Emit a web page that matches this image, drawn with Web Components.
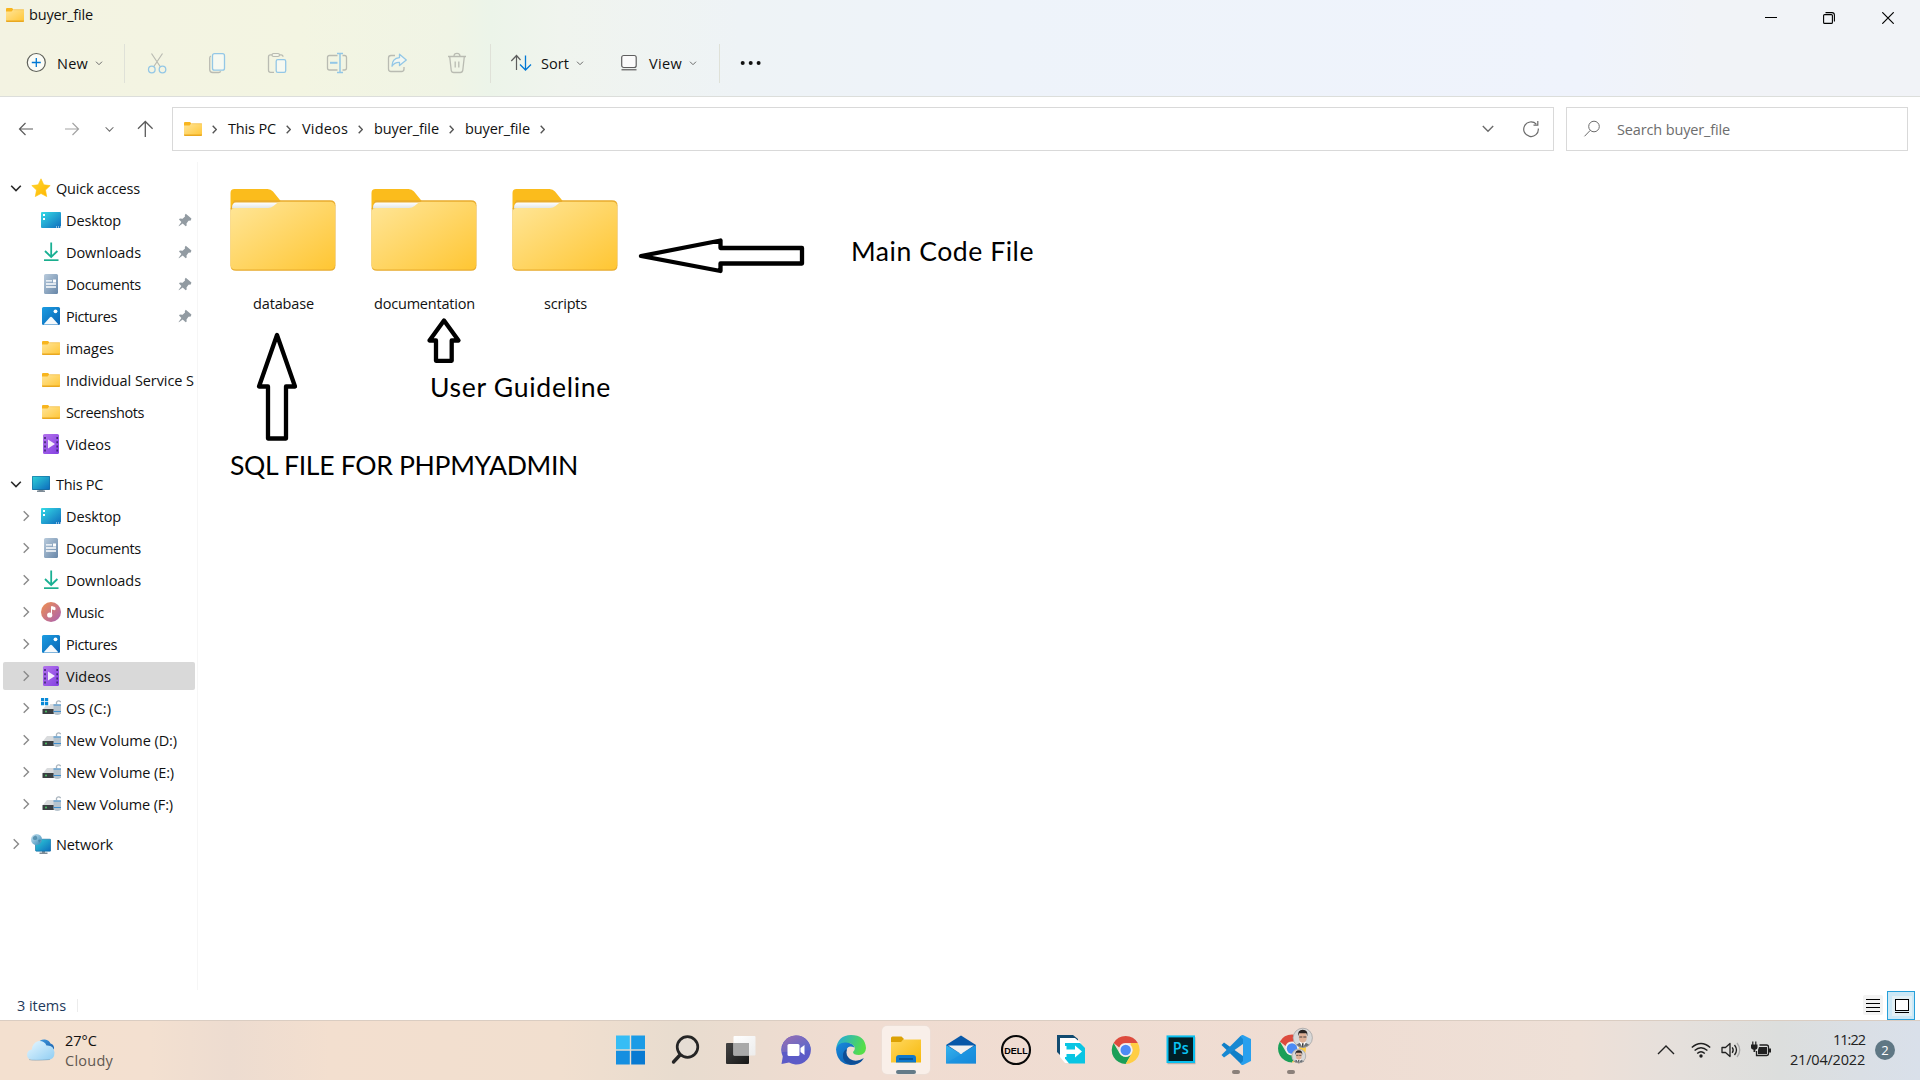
<!DOCTYPE html>
<html lang="en">
<head>
<meta charset="utf-8">
<title>buyer_file</title>
<style>
html,body{margin:0;padding:0;background:#fff}
body{font-family:"Open Sans","Noto Sans",sans-serif;font-size:14.5px;color:#111;width:1920px;height:1080px;overflow:hidden}
</style>
</head>
<body>
<desktop-screen></desktop-screen>
<script>
const lg=(id,a,b,x2=1,y2=1)=>`<linearGradient id="${id}" x1="0" y1="0" x2="${x2}" y2="${y2}"><stop offset="0" stop-color="${a}"/><stop offset="1" stop-color="${b}"/></linearGradient>`;
const G='#6b6b6b', DG='#b9bbb2', DB='#93c7e6';
const drive=`<path d="M6 5h10l4 5H2z" fill="#d9dbdd"/><rect x="1.500" y="10" width="18" height="5" rx=".6" fill="#3b3f42"/><circle cx="5" cy="12.500" r=".9" fill="#4fd66a"/><path d="M15.500 5V3.200a2.300 2.300 0 0 1 4.200 0" fill="none" stroke="#a9b4bd" stroke-width="1.300"/><path d="M12.500 5.500h7.500v9q-3.500 3-7.500 0z" fill="#b7c4ce"/><path d="M12.500 6h7.500M12.500 12.500h7.500" stroke="#3f8fcf" stroke-width="1"/>`;
const chrome=`<path d="M14 0A14 14 0 0 1 26.100 7H14a7 7 0 0 0-6.500 4.400L1.900 7A14 14 0 0 1 14 0z" fill="#dd4b3e"/><path d="M1.900 7A14 14 0 0 0 14 28l6-10.500A7 7 0 0 1 8 17.500z" fill="#1a9f58"/><path d="M26.100 7A14 14 0 0 1 14 28l6-10.500A7 7 0 0 0 19 9V7z" fill="#ffce44"/><circle cx="14" cy="14" r="6.600" fill="#f3f3f3"/><circle cx="14" cy="14" r="5.200" fill="#4c8bf5"/>`;
const person=(cx,cy,r,id)=>`<clipPath id="${id}"><circle cx="${cx}" cy="${cy}" r="${r}"/></clipPath><g clip-path="url(#${id})"><circle cx="${cx}" cy="${cy}" r="${r}" fill="#d8d8d8"/><g transform="translate(${cx} ${cy}) scale(${r/10})"><path d="M-8 12V8l5-3h6l5 3v4z" fill="#6a6f75"/><path d="M-3.500 4h7L0 10z" fill="#fff"/><path d="M-.8 5.500h1.600L.6 10h-1.200z" fill="#333"/><ellipse cy="-.4" rx="4" ry="5.400" fill="#deb096"/><path d="M-4.600-1.500q-1-6.500 4.600-6.500t4.600 6.500L3.500-4.500h-7z" fill="#2a2422"/><path d="M-3.500-.8h3M.5-.8h3" stroke="#333" stroke-width=".9"/></g></g><circle cx="${cx}" cy="${cy}" r="${r-.4}" fill="none" stroke="#a9a6a4" stroke-width=".8"/>`;
const ICONS={
folder:['0 0 18 14',lg('a','#ffe599','#ffc73a')+`<path d="M0 1a1 1 0 0 1 1-1h5l1.500 1.500L6 4H0z" fill="#f8b51e"/><path d="M0 3.600h5.500L7.500 1.500h9.700q.8 0 .8.800V13H0z" fill="url(#a)"/><path d="M0 12.600h18v.6q0 .8-.8.800H.8q-.8 0-.8-.8z" fill="#e9a820"/><path d="M7.600 1.700H18" stroke="#eeb235" stroke-width=".5"/>`],
plus:['0 0 24 24',`<circle cx="12.300" cy="11.500" r="9" fill="#fbfcf6" stroke="#5e6059" stroke-width="1.200"/><path d="M12.300 7v9M7.800 11.500h9" stroke="#0078d4" stroke-width="1.300"/>`],
chev:['0 0 8 8',`<path d="M1 2.700l3 3 3-3" fill="none" stroke="${G}" stroke-width="1"/>`],
cut:['0 0 24 24',`<path d="M6.500 2.500L15.500 16M17.500 2.500L8.500 16" stroke="${DG}" stroke-width="1.200" fill="none"/><circle cx="6.800" cy="18.500" r="3.300" fill="none" stroke="${DB}" stroke-width="1.300"/><circle cx="17.500" cy="18.500" r="3.300" fill="none" stroke="${DB}" stroke-width="1.300"/>`],
copy:['0 0 24 24',`<path d="M6 5q-1.300.5-1.300 2v11.500q0 3 3 3h6q1.500 0 2-1.200" fill="none" stroke="${DG}" stroke-width="1.300"/><rect x="7.500" y="2.700" width="12" height="16.500" rx="2" fill="#f6f9f1" stroke="${DB}" stroke-width="1.300"/>`],
paste:['0 0 24 24',`<path d="M9 21.300H5.500q-2 0-2-2V5.800q0-2 2-2h10.500q2 0 2 2" fill="none" stroke="${DG}" stroke-width="1.300"/><rect x="7" y="2.500" width="7.500" height="3" rx="1.500" fill="#f3f5e8" stroke="${DG}" stroke-width="1.200"/><rect x="11.200" y="8.700" width="9.500" height="12.600" rx="1.600" fill="#f6f9f1" stroke="${DB}" stroke-width="1.300"/>`],
rename:['0 0 24 24',`<path d="M12.500 4.500H4.500q-2 0-2 2v10.500q0 2 2 2h8M17.500 4.500h2q2 0 2 2v10.500q0 2-2 2h-2" fill="none" stroke="${DG}" stroke-width="1.300"/><path d="M5 11.800h7.500" stroke="${DB}" stroke-width="2"/><path d="M12 2.500h6M15 2.500v19M12 21.500h6" stroke="${DB}" stroke-width="1.500"/>`],
share:['0 0 24 24',`<path d="M10 4.500H6q-2.500 0-2.500 2.500v11q0 2.500 2.500 2.500h10.500q2.500 0 2.500-2.500v-2" fill="none" stroke="${DG}" stroke-width="1.300"/><path d="M14.500 3.200l6.800 5.800-6.800 5.600v-3.200q-5-.3-7.500 3.800 0-8 7.500-8.600z" fill="#f2f7f2" stroke="${DB}" stroke-width="1.300" stroke-linejoin="round"/>`],
del:['0 0 24 24',`<path d="M3 5.500h18M9 5.300q0-3 3-3t3 3M4.700 5.800l1.500 13.400q.3 2.300 2.500 2.300h6.600q2.200 0 2.500-2.300L19.300 5.800M10.200 10.500v6M13.800 10.500v6" fill="none" stroke="${DG}" stroke-width="1.300"/>`],
sort:['0 0 24 24',`<path d="M7.500 19V5M2.300 10L7.500 4.500l4 4.500" fill="none" stroke="#5c5c5c" stroke-width="1.200"/><path d="M16.500 4.500V19M11 13.500l5.500 5.500 5.500-5.500" fill="none" stroke="#0078d4" stroke-width="1.300"/>`],
view:['0 0 24 24',`<rect x="4.700" y="4.500" width="14.500" height="12" rx="2" fill="#fbfbfb" stroke="#5e5e5e" stroke-width="1.200"/><path d="M4.500 18.700h15" stroke="#777" stroke-width="1.500"/>`],
dots:['0 0 24 24',`<circle cx="3.700" cy="12" r="2" fill="#111"/><circle cx="11.700" cy="12" r="2" fill="#111"/><circle cx="19.600" cy="12" r="2" fill="#111"/>`],
min:['0 0 12 12',`<path d="M0 5.500h12" stroke="#000"/>`],
max:['0 0 12 12',`<rect x=".6" y="2.600" width="8.800" height="8.800" rx="1" fill="none" stroke="#000" stroke-width="1.100"/><path d="M2.500.6H9q2.400 0 2.400 2.400v6.500" fill="none" stroke="#000" stroke-width="1.100"/>`],
close:['0 0 12 12',`<path d="M.3.300l11.400 11.400M11.700.3L.3 11.700" stroke="#000" stroke-width="1.200"/>`],
back:['0 0 20 20',`<path d="M17 10H4M9.500 4L3.500 10l6 6" fill="none" stroke="#5c5c5c" stroke-width="1.200"/>`],
fwd:['0 0 20 20',`<path d="M3 10h13M10.500 4l6 6-6 6" fill="none" stroke="#a3a3a3" stroke-width="1.200"/>`],
up:['0 0 20 20',`<path d="M10.300 18V2.700M3 9.800l7.300-7.300 7.300 7.300" fill="none" stroke="#5c5c5c" stroke-width="1.300"/>`],
chevd:['0 0 12 12',`<path d="M.8 3l5.200 5.200L11.200 3" fill="none" stroke="${G}" stroke-width="1.400"/>`],
sep:['0 0 5 9',`<path d="M.7.800l3.600 3.700L.7 8.200" fill="none" stroke="#555" stroke-width="1.400"/>`],
refresh:['0 0 18 18',`<path d="M16.300 8.500A7.300 7.300 0 1 1 14.300 4.200M15.800 1v4.200h-4.300" fill="none" stroke="${G}" stroke-width="1.200"/>`],
find:['0 0 18 18',`<circle cx="11" cy="6.500" r="5.300" fill="none" stroke="${G}" stroke-width="1"/><path d="M7.300 10.300L1.500 16.300" stroke="${G}" stroke-width="1"/>`],
open:['0 0 12 12',`<path d="M1.200 3.700l4.800 4.800 4.800-4.800" fill="none" stroke="#2b2b2b" stroke-width="1.600"/>`],
shut:['0 0 12 12',`<path d="M3.700 1.200L8.500 6l-4.800 4.800" fill="none" stroke="#8a8a8a" stroke-width="1.400"/>`],
star:['0 0 20 20',lg('a','#ffd92e','#ffb300')+`<path d="M10 .8l2.800 6 6.400.8-4.700 4.500 1.200 6.500L10 15.500l-5.700 3.100 1.200-6.500L.8 7.600l6.400-.8z" fill="url(#a)" stroke="#ffc40c" stroke-linejoin="round" stroke-width=".6"/>`],
desktop:['0 0 20 20',lg('a','#35dbe6','#0f6cbd')+`<rect y="2" width="20" height="16" rx="1" fill="url(#a)"/><path d="M2 4h2v2H2zM2 8h2v2H2zM15 16.500h1v1h-1zM17 16.500h1v1h-1zM19 16.500h1v1h-1z" fill="#fff"/>`],
down:['0 0 20 20',`<path d="M10.200.5v14M4 9l6.200 6L16.400 9" fill="none" stroke="#19b093" stroke-width="1.800"/><rect x="3" y="17.300" width="14.500" height="1.700" fill="#1aae8e"/>`],
doc:['0 0 20 20',lg('a','#b9cbdc','#6786a8')+`<rect x="3" y="0" width="14" height="20" rx="1.500" fill="url(#a)"/><path d="M5 6.800h6M5 10h10M5 13h10" stroke="#fff" stroke-width="1.300"/><rect x="12" y="5.500" width="3" height="3" fill="#fff"/>`],
pic:['0 0 20 20',lg('a','#1b9de2','#0a64b4')+`<rect x="1" y="1" width="18" height="18" rx="1.500" fill="url(#a)"/><circle cx="14.500" cy="5.300" r="1.900" fill="#fff"/><path d="M2.500 18.600L9 11.300q1-1 2 0l6.500 7.300z" fill="#f5f9fc"/>`],
video:['0 0 20 20',lg('a','#b473ec','#8340e2')+`<rect x="2" y="0" width="16" height="20" rx="1.500" fill="url(#a)"/><path d="M7 5.500l7 4.500-7 4.500z" fill="#f4edfc"/><path d="M4 3v15M16.200 3v15" stroke="#3d2672" stroke-width="1.600" stroke-dasharray="2 2.200"/>`],
music:['0 0 20 20',lg('a','#f0904e','#a960b4')+`<circle cx="10" cy="10" r="10" fill="url(#a)"/><circle cx="8.700" cy="13" r="2.600" fill="#fff"/><path d="M10.500 13V4.500l3.500 1v2.300l-3.500-1" fill="#fff" stroke="#fff" stroke-width="1"/>`],
pc:['0 0 20 20',lg('a','#2fd0d8','#0d6cbd')+`<path d="M7.500 14.500h5V17h-5zM6 16.500h8V18H6z" fill="#7d8b96"/><rect x="1" y="2" width="18" height="14" rx=".8" fill="#166a9e"/><rect x="1.600" y="2.600" width="16.800" height="12.600" fill="url(#a)"/>`],
net:['0 0 20 20',lg('a','#2fd0d8','#0d6cbd')+lg('b','#d5eaf5','#2f86b5')+`<path d="M11 17h3v2h-3zM8.500 18.500h8V20h-8z" fill="#7d8b96"/><rect x="4.500" y="5.200" width="15.300" height="12" rx=".8" fill="url(#a)" stroke="#166a9e" stroke-width=".6"/><circle cx="5.500" cy="5.500" r="5.500" fill="url(#b)"/><path d="M2 3q3-3 4 0t-2 3-2-3zM7 6q2-1 3 0l-2 3z" fill="#3f7f9f" opacity=".7"/>`],
drive:['0 0 20 20',`<g transform="translate(0 1)">${drive}</g>`],
osdrive:['0 0 20 20',`<g transform="translate(0 1)">${drive}</g><rect width="9" height="7.500" fill="#fff"/><path d="M0 0h3.200v3.200H0zM4 0h3.200v3.200H4zM0 4h3.200v3.200H0zM4 4h3.200v3.200H4z" fill="#0a8ad8"/>`],
pin:['0 0 14 14',`<path d="M7.800.800l5.600 4.800-.6 1.800-2.300.3-2 2.700.2 2-1 .8-3-2.800L.9 13.300l-.3-.4 2.800-3.800L1 6.500l.9-1 2.700.2L7 3.500l-.2-1.600z" fill="#929ba2"/>`],
big:['0 0 106 84',lg('a','#ffe699','#ffc633')+lg('w','#ffffff','#dfe4e8',0,1)+`<path d="M.5 20V4q0-4 4-4h33q3.500 0 5.500 2.500l8.500 10.500-8 8z" fill="#fbbc1c"/><path d="M4 11.300h96q5.500 0 5.500 5v60q0 5.500-5.500 5.500H6q-5.500 0-5.500-5.500V20z" fill="#e8ab2c"/><path d="M2 19q0-5.500 4-5.500h43v6H2z" fill="url(#w)"/><path d="M.5 23.500q0-4.500 4.500-4.500h33q3 0 5.500-2l3-2.500q1.500-1.700 4-1.700H100q5 0 5 4.500V75.500q0 5-5 5H6q-5.500 0-5.500-5z" fill="url(#a)"/>`],
list:['0 0 14 14',`<path d="M0 1.500h14M0 5.500h14M0 9.500h14M0 13.500h14" stroke="#000" stroke-width="1"/>`],
large:['0 0 14 14',`<rect x=".5" y=".5" width="13" height="11" fill="#fff" stroke="#000"/><path d="M0 13.500h14" stroke="#000"/>`],
cloud:['0 0 30 24',lg('a','#e8f8ff','#8fcdf3')+lg('b','#3f9ae0','#1c62ae')+`<path d="M12 5Q14 1 19 1.500q4 .5 5.500 4 4 1 3.500 6L20 9z" fill="url(#b)"/><path d="M7 22q-6-.5-6-5.500Q1.500 12 6 11.500 6 5 12.500 3q6-.5 8 4.500Q28 7 28.500 14.500 28.500 21.500 22 22z" fill="url(#a)"/><path d="M3 21.500q4 1.500 21 0" stroke="#6d91aa" stroke-width=".8" fill="none" opacity=".6"/>`],
start:['0 0 32 32',`<path d="M1 1.500h13.800v13.800H1z" fill="#36bdf5"/><path d="M16.200 1.500H30v13.800H16.200z" fill="#1a9be6"/><path d="M1 16.700h13.800v13.800H1z" fill="#158fe0"/><path d="M16.200 16.700H30v13.800H16.200z" fill="#087ad2"/>`],
search:['0 0 32 32',`<circle cx="17.500" cy="13" r="10.300" fill="#e5ddd4" stroke="#252525" stroke-width="2.700"/><path d="M10 21L3.500 28" stroke="#252525" stroke-width="3.400" stroke-linecap="round"/>`],
task:['0 0 32 32',lg('a','#444','#171717')+lg('b','#fff','#ececec')+`<rect x="1" y="9" width="23" height="21" rx="1" fill="url(#a)"/><rect x="8.500" y="2" width="22" height="19.500" rx="1" fill="url(#b)"/><path d="M8.500 9H24v12.500H8.500z" fill="#a9a9a9"/>`],
chat:['0 0 32 32',lg('a','#9b6eb0','#5267d0')+`<path d="M16 1.500a14.500 14.500 0 1 1-7 27L1.500 30l1.300-7.500A14.500 14.500 0 0 1 16 1.500z" fill="#5c5bc7"/><path d="M16 1.500A14.500 14.500 0 0 1 30.500 16Q16 18 2 18 1 3 16 1.500z" fill="url(#a)"/><rect x="7.500" y="10" width="12" height="12" rx="1.500" fill="#fff"/><path d="M20.500 14l4-3v10l-4-3z" fill="#fff"/>`],
edge:['0 0 32 32',lg('a','#1fa5e8','#55de48',1,.3)+lg('b','#188cdf','#0a50a0')+`<path d="M1 15Q3 1 16 1q14 0 15 13-.5 7-7 7-6 0-6-3 3-3 1-6-4-5-11-2-5 1-7 5z" fill="url(#a)"/><path d="M1 15Q3 8 11 8.500q7 .5 8.500 5-6-3-8 2-2 7 4 10.500 6 3 13-1Q24 31 16 31 2 30 1 15z" fill="url(#b)"/><path d="M12 15q-2 6 3 10 6 4 14-1-5 7-14 6.500Q7 28 8 20q1-4 4-5z" fill="#0d4e96"/>`],
explorer:['0 0 32 32',lg('a','#ffd75e','#f7b90b')+`<path d="M1 4q0-1.500 1.500-1.500h9L14 5l-3 4H1z" fill="#dca104"/><path d="M1 8h10l2.500-2.500H31V28.500H1z" fill="url(#a)"/><path d="M6 28.500V24q0-3 3-3h14q3 0 3 3v4.500z" fill="#0f78ca"/><path d="M9 25h14" stroke="#074c89" stroke-width="1.500"/>`],
mail:['0 0 32 32',lg('a','#34b4ef','#1681d3')+`<path d="M1 11L16 1.500 31 11v8H1z" fill="#0858a8"/><path d="M1 11l15 9 15-9v18.500H1z" fill="url(#a)"/><path d="M1 29.500L31 11v18.500z" fill="#168fe0" opacity=".55"/><path d="M3 11.500L16 20l13-8.500z" fill="#f2f1f0"/>`],
dell:['0 0 32 32',`<circle cx="16" cy="16" r="14" fill="none" stroke="#080808" stroke-width="2.100"/><text x="16" y="19.500" text-anchor="middle" font-family="Liberation Sans,sans-serif" font-weight="700" font-size="9.800" textLength="23.500" lengthAdjust="spacingAndGlyphs">DELL</text>`],
swap:['0 0 32 32',`<path d="M2 1h16l5 4v20H9l-7-7z" fill="#124b70"/><path d="M5 4h15l6 5v20H10L5 23z" fill="#fff"/><path d="M10 9l15 0 5 5v15.500H14l-4-5z" fill="#09c5e3"/><path d="M10 15.500h10v-4l7 6-7 6v-3.500H10z" fill="#fff"/><path d="M10 12v11" stroke="#fff" stroke-width="3"/>`],
chrome:['0 0 32 32',`<g transform="translate(1.700 2)">${chrome}</g>`],
ps:['0 0 32 32',`<rect x="2.500" y="3.200" width="28" height="27" fill="#777" opacity=".45"/><rect x="2.500" y="2.400" width="26.500" height="25.600" fill="#001e26" stroke="#0abfef" stroke-width="2"/><text x="15.800" y="20" text-anchor="middle" font-family="Open Sans,sans-serif" font-weight="600" font-size="15.500" fill="#09c4f5" textLength="16" lengthAdjust="spacingAndGlyphs">Ps</text>`],
code:['0 0 32 32',`<path d="M4 8.500L1.500 11l19 18.500L23 31V22z" fill="#0f7fc8"/><path d="M4 23.500L1.500 21l19-19L23 1v9z" fill="#1688d2"/><path d="M23 1l8 4v22l-8 4q-2 0-2.500-1.500L23 27V5l-2.500-2.500Q21.500 1 23 1z" fill="#28a0ee"/>`],
chrome2:['0 0 38 38',`<g transform="translate(2 7.500)">${chrome}</g>${person(26.800,10.800,10,'p')}${person(22.800,29,7.300,'q')}`],
caret:['0 0 18 18',`<path d="M1 13l8-8 8 8" fill="none" stroke="#222" stroke-width="1.400"/>`],
wifi:['0 0 20 20',`<path d="M.8 7.500q9.200-8 18.400 0M3.600 10.500q6.400-5.500 12.800 0M6.200 13.500q3.800-3.500 7.600 0" fill="none" stroke="#202020" stroke-width="1.400"/><circle cx="10" cy="16" r="1.700" fill="#202020"/>`],
sound:['0 0 20 20',`<path d="M1 7.500h3.500L9 3.500v13l-4.500-4H1z" fill="none" stroke="#202020" stroke-width="1.300" stroke-linejoin="round"/><path d="M11.200 7.300q2 2.700 0 5.500M13.500 5q4 5 0 10" fill="none" stroke="#202020" stroke-width="1.300"/><path d="M16 3q5.500 7 0 14" fill="none" stroke="#aaa" stroke-width="1.300"/>`],
batt:['0 0 20 20',`<path d="M8.500 5h7q2 0 2 2v6.500q0 2-2 2h-10V11" fill="none" stroke="#202020" stroke-width="1.300"/><path d="M8 7h8v7H7v-4z" fill="#202020"/><path d="M18 8.500h2v4h-2zM0 4.500h6.500v3q0 2-2.200 2.300V12H2.500V9.800Q0 9.500 0 7.500zM1.200 1.500h1.200v3H1.200zM4.200 1.500h1.200v3H4.200z" fill="#202020"/>`]
};
/* <ui-icon name w h> draws one icon of the set above */
class UiIcon extends HTMLElement{constructor(){super();this.attachShadow({mode:'open'})}
connectedCallback(){const i=ICONS[this.getAttribute('name')];const v=i[0].split(' ');const w=this.getAttribute('w')||v[2],h=this.getAttribute('h')||v[3];
this.shadowRoot.innerHTML=`<style>:host{display:block;flex:none;width:${w}px;height:${h}px}svg{display:block}</style><svg width="${w}" height="${h}" viewBox="${i[0]}">${i[1]}</svg>`}}
customElements.define('ui-icon',UiIcon);
/* <fit-text w> spaces its letters so that the line fills the given width */
class FitText extends HTMLElement{constructor(){super();this.attachShadow({mode:'open'})}
connectedCallback(){const w=+this.getAttribute('w');const t=this.textContent;this.shadowRoot.innerHTML=`<style>:host{display:block;flex:none;width:${w}px;white-space:pre;line-height:20px}span{display:inline-block}</style><span><slot></slot></span>`;
const s=this.shadowRoot.querySelector('span');const n=s.getBoundingClientRect().width;s.style.letterSpacing=((w-n)/t.length).toFixed(3)+'px'}}
customElements.define('fit-text',FitText);
const define=(tag,html)=>{const t=document.createElement('template');t.innerHTML=html;customElements.define(tag,class extends HTMLElement{constructor(){super();this.attachShadow({mode:'open'}).append(t.content.cloneNode(true))}})};
const ic=(n,ml,w,h)=>`<ui-icon name="${n}" style="margin-left:${ml}px"${w?` w="${w}"`:''}${h?` h="${h}"`:''}></ui-icon>`;
const tx=(t,ml,w)=>`<fit-text w="${w}" style="margin-left:${ml}px">${t}</fit-text>`;

define('title-bar',`<style>:host{display:flex;height:30px;align-items:flex-start}.t{display:flex;flex:1;padding:5px 0 0 6px;align-items:center}.c{display:flex;align-items:center;padding:12px 26px 0 0;gap:46px}</style>
<div class="t">${ic('folder',0)}${tx('buyer_file',5,64)}</div><div class="c">${ic('min',0)}${ic('max',0)}${ic('close',1)}</div>`);

define('command-bar',`<style>:host{display:flex;height:66px;align-items:center}i{width:1px;height:39px;background:#dfe1d8}fit-text{padding-top:1px}</style>
${ic('plus',24)}${tx('New',9,31)}${ic('chev',7)}<i style="margin-left:21px"></i>${ic('cut',20)}${['copy','paste','rename','share','del'].map(n=>ic(n,36)).join('')}<i style="margin-left:21px"></i>${ic('sort',18)}${tx('Sort',8,28)}${ic('chev',7)}${ic('view',33)}${tx('View',8,33)}${ic('chev',7)}<i style="margin-left:22px"></i>${ic('dots',19)}`);

define('address-row',`<style>:host{display:flex;height:65px;padding-top:10px;box-sizing:border-box;align-items:flex-start}.n{display:flex;align-items:center;height:44px;width:172px}.b{display:flex;align-items:center;box-sizing:border-box;height:44px;border:1px solid #d9d9d9;width:1382px}.s{width:342px;margin-left:12px;color:#6d6d6d}.s fit-text{padding-top:1px}.g{flex:1}</style>
<div class="n">${ic('back',16)}${ic('fwd',26)}${ic('chevd',23,9,9)}${ic('up',21)}</div>
<div class="b">${ic('folder',11)}${ic('sep',10)}${tx('This PC',11,48)}${ic('sep',10)}${tx('Videos',11,46)}${ic('sep',10)}${tx('buyer_file',11,65)}${ic('sep',10)}${tx('buyer_file',11,65)}${ic('sep',10)}<div class="g"></div>${ic('chevd',0)}<ui-icon name="refresh" style="margin:0 13px 0 28px"></ui-icon></div>
<div class="b s">${ic('find',16)}${tx('Search buyer_file',16,113)}</div>`);

class NavItem extends HTMLElement{constructor(){super();this.attachShadow({mode:'open'})}
connectedCallback(){const a=n=>this.getAttribute(n);const top=this.hasAttribute('top');const ar=a('arrow');const ico=a('icon');
this.shadowRoot.innerHTML=`<style>:host{display:block;height:32px}.r{display:flex;align-items:center;height:28px;width:192px;margin-left:3px;position:relative;top:1px;border-radius:2px;overflow:hidden}:host([selected]) .r{background:#d9d9d9}.a{width:12px;margin-left:${top?7:17}px}.i{width:20px;margin-left:9px;display:flex;justify-content:center}.g{flex:1}fit-text{margin-left:5px;padding-top:2px}ui-icon{flex:none}</style>
<div class="r"><div class="a">${ar?ic(ar,0):''}</div><div class="i">${ic(ico,0)}</div><fit-text w="${a('w')-1}">${a('label')}</fit-text><div class="g"></div>${this.hasAttribute('pinned')?'<ui-icon name="pin" style="margin-right:3px"></ui-icon>':''}</div>`}}
customElements.define('nav-item',NavItem);
const ni=(l,i,w,x='')=>`<nav-item label="${l}" icon="${i}" w="${w}" ${x}></nav-item>`;
define('nav-pane',`<style>:host{display:block;width:197px;border-right:1px solid #f6f6f6;padding-top:11px;box-sizing:content-box;height:817px}.g{margin-bottom:8px}</style>
<div class="g">${ni('Quick access','star',85,'top arrow="open"')}${ni('Desktop','desktop',56,'pinned')}${ni('Downloads','down',76,'pinned')}${ni('Documents','doc',76,'pinned')}${ni('Pictures','pic',52,'pinned')}${ni('images','folder',49)}${ni('Individual Service S','folder',129)}${ni('Screenshots','folder',79)}${ni('Videos','video',46)}</div>
<div class="g">${ni('This PC','pc',48,'top arrow="open"')}${[['Desktop','desktop',56],['Documents','doc',76],['Downloads','down',76],['Music','music',39],['Pictures','pic',52],['Videos','video',46,1],['OS (C:)','osdrive',46],['New Volume (D:)','drive',112],['New Volume (E:)','drive',109],['New Volume (F:)','drive',108]].map(r=>ni(r[0],r[1],r[2],'arrow="shut"'+(r[3]?' selected':''))).join('')}</div>
${ni('Network','net',58,'top arrow="shut"')}`);

define('folder-tile',`<style>:host{display:flex;flex-direction:column;align-items:center;width:141px;gap:21px}</style><ui-icon name="big"></ui-icon><slot></slot>`);
/* Folder grid, with the drawn arrows and notes lying over it */
define('file-area',`<style>:host{display:block;position:relative;flex:1;height:828px}.f{display:flex;padding:27px 0 0 14px}svg,.n{position:absolute}svg{left:-198px;top:-162px}.n{font-family:Lato,sans-serif;font-size:26.6px;color:#000}</style>
<div class="f"><folder-tile>${tx('database',2,61)}</folder-tile><folder-tile>${tx('documentation',2,101)}</folder-tile><folder-tile>${tx('scripts',2,43)}</folder-tile></div>
<svg width="900" height="460" fill="#fff" stroke="#000" stroke-width="4.300" stroke-linejoin="round"><path d="M277 335L295 386.500H286V438.500H268V386.500H259z"/><path d="M444 320.500L458.500 340.500H451.700V360.800H436V340.500H429.500z"/><path d="M641 256L720.500 240.500V248H802V263.500H720.500V271z"/></svg>
<fit-text class="n" w="183" style="left:653px;top:79px">Main Code File</fit-text><fit-text class="n" w="181" style="left:232px;top:215px">User Guideline</fit-text><fit-text class="n" w="348" style="left:32px;top:293px">SQL FILE FOR PHPMYADMIN</fit-text>`);

define('status-bar',`<style>:host{display:flex;height:30px;align-items:center;color:#1e395b}fit-text{padding-top:1px}i{width:1px;height:13px;background:#ececec;margin-left:11px}.g{flex:1}.v{width:20px;height:20px;background:#f3f3f3;display:flex;align-items:center;justify-content:center;border-radius:2px;margin:-1px 4px 0 0}.s{box-sizing:border-box;width:28px;height:29px;background:#cbe8f6;border:1px solid #26a0da;margin-right:5px;align-self:flex-start;margin-top:1px;display:flex;align-items:center;justify-content:center}.s div{width:20px;height:20px;background:#e2f0f5;display:flex;align-items:center;justify-content:center;margin-left:2px}</style>
${tx('3 items',17,49)}<i></i><div class="g"></div><div class="v"><ui-icon name="list"></ui-icon></div><div class="s"><div><ui-icon name="large"></ui-icon></div></div>`);

class TaskButton extends HTMLElement{constructor(){super();this.attachShadow({mode:'open'})}
connectedCallback(){const big=this.getAttribute('icon')==='chrome2';this.shadowRoot.innerHTML=`<style>:host{display:block;width:55px;height:60px}.b{position:relative;width:48px;height:48px;margin:6px 3.500px;border-radius:5px;display:flex;align-items:center;justify-content:center}:host([active]) .b{background:#f9efe9;box-shadow:0 0 0 .7px #ecdfd8}.m{position:absolute;left:20px;bottom:0;width:8px;height:4px;border-radius:2px;background:#8b807a;display:none}:host([running]) .m,:host([active]) .m{display:block}:host([active]) .m{width:20px;left:14px;background:#647b88}ui-icon{${big?'margin:-9px 0 0 8px':''}}</style><div class="b"><ui-icon name="${this.getAttribute('icon')}"></ui-icon><div class="m"></div></div>`}}
customElements.define('task-button',TaskButton);
define('task-bar',`<style>:host{display:flex;height:60px;box-sizing:border-box;border-top:1px solid #dacdc2;background:linear-gradient(90deg,#f3e0cf 0,#f3e0d0 150px,#eddcd0 230px,#f3dfcf 330px,#f1dfcf 560px,#e8dccf 680px,#f0dcd1 850px,#efddd3 1350px,#eee0d7 1580px,#e5e0dc 1680px,#dcdedd 1780px,#dadfe5 1860px,#d9e0ea 1920px)}.w{display:flex;width:603px;padding-top:10px;box-sizing:border-box}.c{color:#5f5751}.a{display:flex;margin-top:-1px;width:715px}.t{display:flex;align-items:flex-start;margin-left:auto;width:264px;height:60px}.d{display:flex;flex-direction:column;align-items:flex-end;width:75px;margin:9px 0 0 19px;color:#222}.b{width:20px;height:20px;border-radius:50%;background:#5f7784;color:#fff;line-height:20px;text-align:center;margin:19px 0 0 10px;font-size:13px}</style>
<div class="w"><ui-icon name="cloud" style="margin:7px 0 0 26px"></ui-icon><div>${tx('27°C',9,32)}<div class="c">${tx('Cloudy',9,48)}</div></div></div>
<div class="a">${['start','search','task','chat','edge','explorer','mail','dell','swap','chrome','ps','code','chrome2'].map(n=>`<task-button icon="${n}" ${n==='explorer'?'active':''} ${n==='code'||n==='chrome2'?'running':''}></task-button>`).join('')}</div>
<div class="t"><ui-icon name="caret" style="margin:20px 0 0 1px"></ui-icon><ui-icon name="wifi" style="margin:19px 0 0 16px"></ui-icon><ui-icon name="sound" style="margin:19px 0 0 10px"></ui-icon><ui-icon name="batt" style="margin:19px 0 0 10px"></ui-icon><div class="d">${tx('11:22',0,32)}${tx('21/04/2022',0,75)}</div><div class="b">2</div></div>`);

define('desktop-screen',`<style>:host{display:flex;flex-direction:column;width:1920px;height:1080px;background:#fff}header{height:96px;border-bottom:1px solid #dcdedb;background:linear-gradient(90deg,#f3f3e2 0,#f3f5e2 300px,#f0f4e5 450px,#ecf4e9 490px,#f0f4ee 560px,#eef3f6 740px,#eef3fa 1000px,#eff3fc 1580px,#f1f3f7 1700px,#f1f3f7 1920px)}main{display:flex;height:828px}</style>
<header><title-bar></title-bar><command-bar></command-bar></header><address-row></address-row><main><nav-pane></nav-pane><file-area></file-area></main><status-bar></status-bar><task-bar></task-bar>`);
</script>
</body>
</html>
